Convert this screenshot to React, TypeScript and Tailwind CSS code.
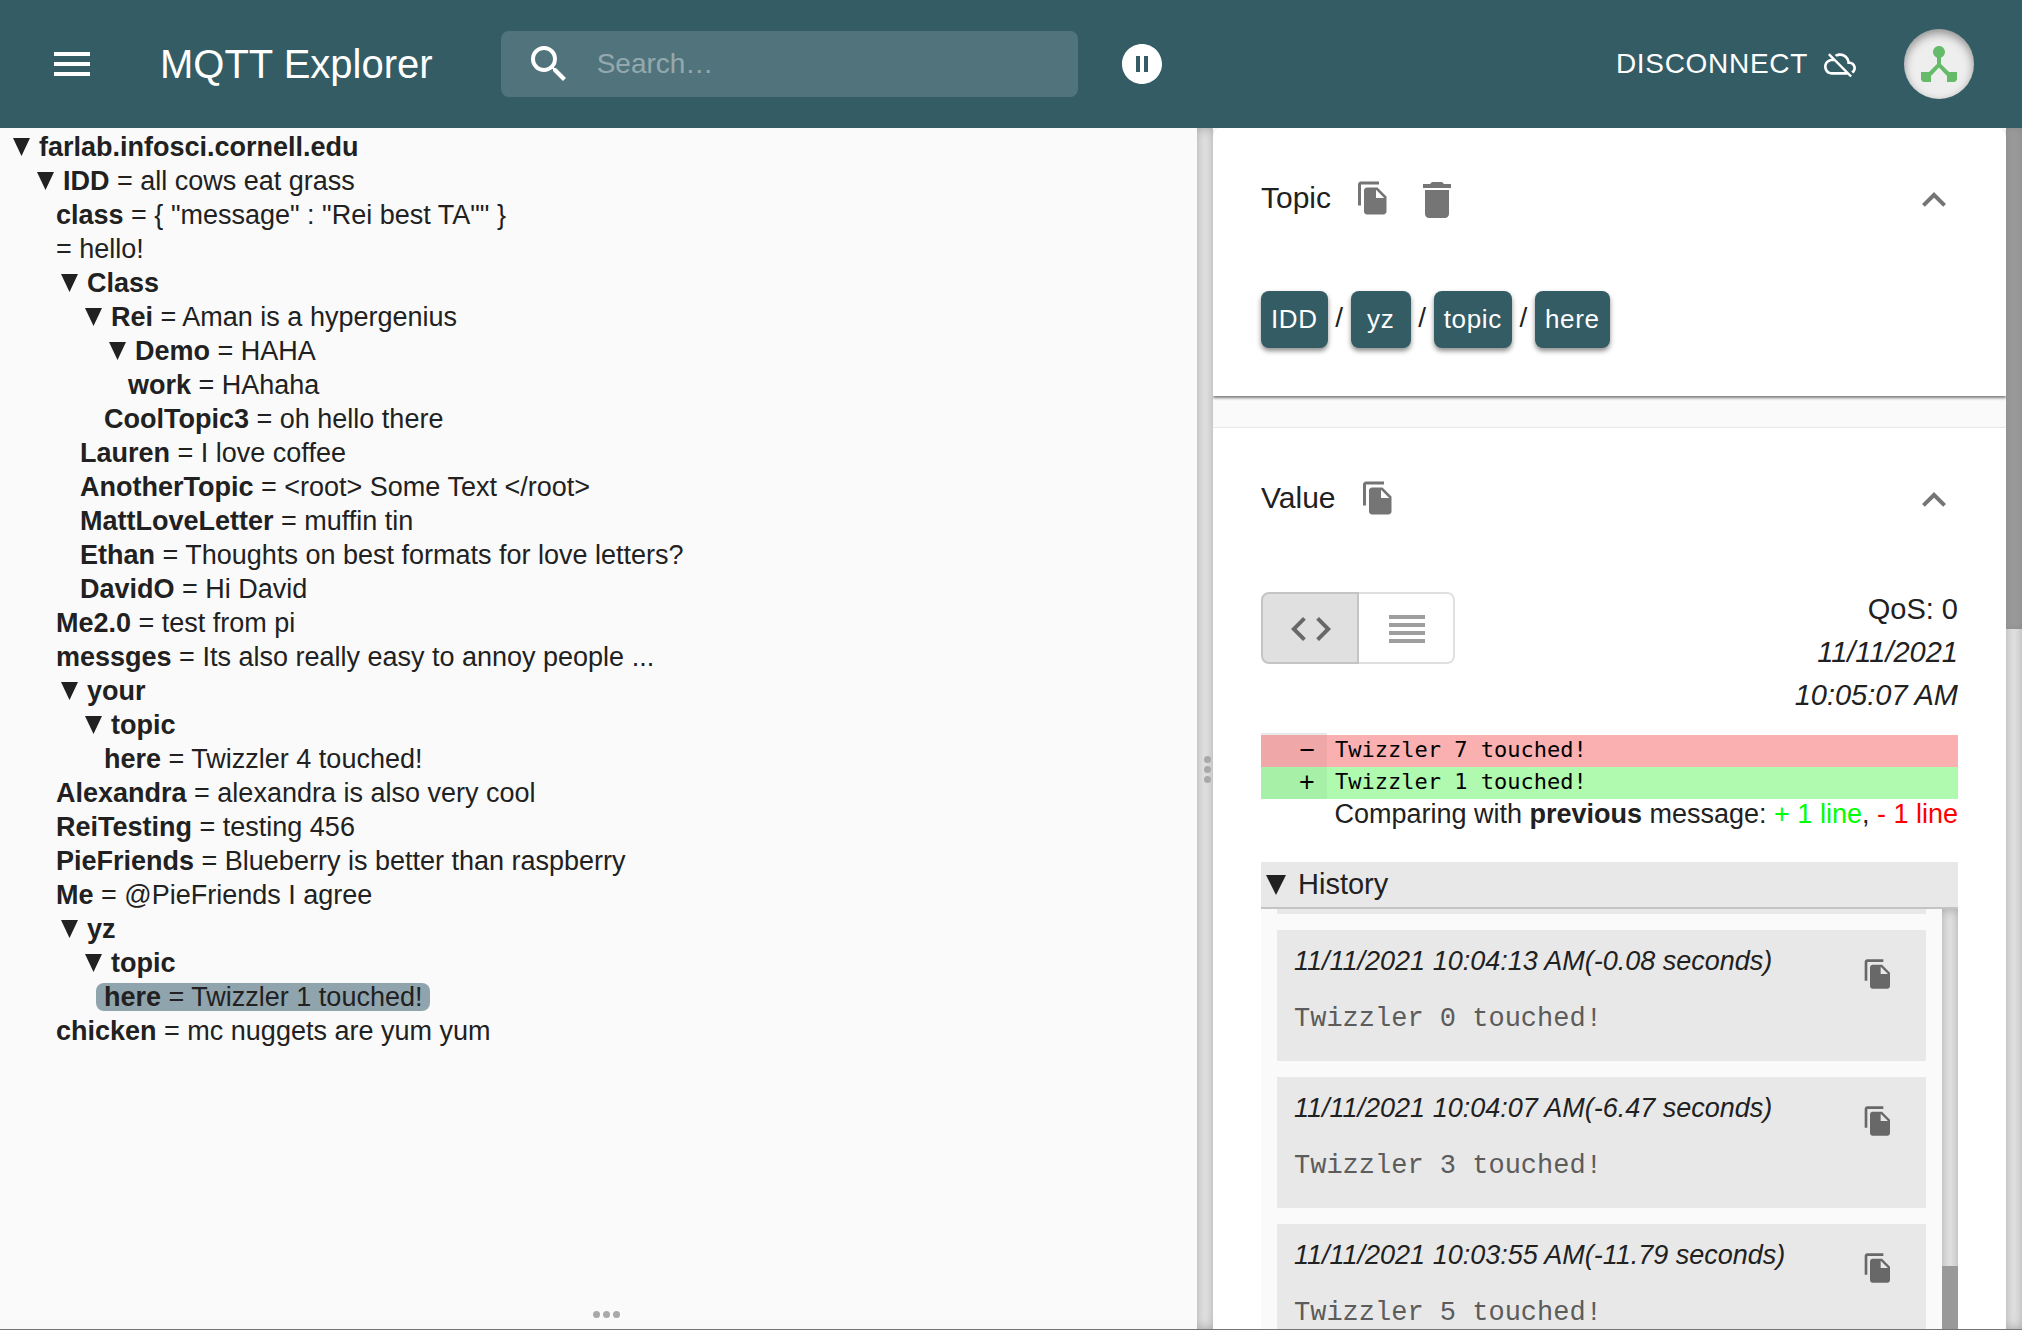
import { useState } from "react";
import type { ReactNode } from "react";
import {
  MdCloudOff,
  MdCode,
  MdDelete,
  MdDeviceHub,
  MdExpandLess,
  MdMenu,
  MdPauseCircleFilled,
  MdReorder,
  MdSearch,
} from "react-icons/md";

type TopicNode = {
  name?: string;
  value?: string;
  selected?: boolean;
  children?: TopicNode[];
};

const tree: TopicNode = {
  name: "farlab.infosci.cornell.edu",
  children: [
    {
      name: "IDD",
      value: "all cows eat grass",
      children: [
        { name: "class", value: '{ "message" : "Rei best TA"" }' },
        { value: "hello!" },
        {
          name: "Class",
          children: [
            {
              name: "Rei",
              value: "Aman is a hypergenius",
              children: [
                { name: "Demo", value: "HAHA", children: [{ name: "work", value: "HAhaha" }] },
                { name: "CoolTopic3", value: "oh hello there" },
              ],
            },
            { name: "Lauren", value: "I love coffee" },
            { name: "AnotherTopic", value: "<root> Some Text </root>" },
            { name: "MattLoveLetter", value: "muffin tin" },
            { name: "Ethan", value: "Thoughts on best formats for love letters?" },
            { name: "DavidO", value: "Hi David" },
          ],
        },
        { name: "Me2.0", value: "test from pi" },
        { name: "messges", value: "Its also really easy to annoy people ..." },
        {
          name: "your",
          children: [{ name: "topic", children: [{ name: "here", value: "Twizzler 4 touched!" }] }],
        },
        { name: "Alexandra", value: "alexandra is also very cool" },
        { name: "ReiTesting", value: "testing 456" },
        { name: "PieFriends", value: "Blueberry is better than raspberry" },
        { name: "Me", value: "@PieFriends I agree" },
        {
          name: "yz",
          children: [
            {
              name: "topic",
              children: [{ name: "here", value: "Twizzler 1 touched!", selected: true }],
            },
          ],
        },
        { name: "chicken", value: "mc nuggets are yum yum" },
      ],
    },
  ],
};

const history = [
  { when: "11/11/2021 10:04:13 AM(-0.08 seconds)", text: "Twizzler 0 touched!" },
  { when: "11/11/2021 10:04:07 AM(-6.47 seconds)", text: "Twizzler 3 touched!" },
  { when: "11/11/2021 10:03:55 AM(-11.79 seconds)", text: "Twizzler 5 touched!" },
];

function CopyIcon({ className }: { className: string }) {
  return (
    <svg viewBox="0 0 24 24" className={className} fill="currentColor" aria-hidden="true">
      <path d="M16 1H4c-1.1 0-2 .9-2 2v14h2V3h12V1zm-1 4l6 6v10c0 1.1-.9 2-2 2H7.99C6.89 23 6 22.1 6 21l.01-14c0-1.1.89-2 1.99-2h7zm-1 7h5.5L14 6.5V12z" />
    </svg>
  );
}

function Triangle() {
  return (
    <svg viewBox="0 0 18 18" className="size-[18px] shrink-0 fill-[#212121]" aria-hidden="true">
      <path d="M0 0h17L8.500 18z" />
    </svg>
  );
}

function TreeItem({ node }: { node: TopicNode }) {
  const [open, setOpen] = useState(true);
  const branch = Boolean(node.children);
  return (
    <li role="treeitem" aria-selected={Boolean(node.selected)}>
      <div className="flex h-[34px] items-center">
        <button
          type="button"
          onClick={() => setOpen(!open)}
          className={
            node.selected
              ? "flex h-7 items-center rounded-lg bg-[#90a4ad] px-2"
              : "flex h-7 items-center rounded-lg px-2"
          }
        >
          {branch && (
            <span className="flex w-[31px] pl-[5px]">
              <Triangle />
            </span>
          )}
          <span className="whitespace-pre">
            {node.name && <b>{node.name}</b>}
            {node.name && node.value ? " " : ""}
            {node.value ? `= ${node.value}` : ""}
          </span>
        </button>
      </div>
      {branch && open && (
        <ul role="group" className="pl-6">
          {node.children!.map((child, i) => (
            <TreeItem key={i} node={child} />
          ))}
        </ul>
      )}
    </li>
  );
}

function ScrollTrack({ children }: { children?: ReactNode }) {
  return (
    <div className="flex w-4 shrink-0 flex-col bg-[#e8e8e8] shadow-[inset_0_0_12px_rgba(0,0,0,0.3)]">
      {children}
    </div>
  );
}

function SectionHeader({ title, actions }: { title: string; actions: ReactNode }) {
  return (
    <div className="flex h-12 items-center justify-between">
      <div className="flex items-center">
        <h2 className="pb-1 text-[30px] leading-10">{title}</h2>
        {actions}
      </div>
      <button type="button" aria-label={`Collapse ${title}`}>
        <MdExpandLess className="size-12 text-[#757575]" />
      </button>
    </div>
  );
}

function Dot() {
  return <span className="size-[7px] rounded-full bg-[#a9a9a9]" />;
}

export default function App() {
  return (
    <div className="flex h-screen w-full flex-col overflow-hidden border-b border-[#757575] bg-[#fafafa] font-['Liberation_Sans',Arial,sans-serif] text-[28px] text-[#212121]">
      <header className="flex h-32 shrink-0 items-center bg-[#335c65] px-12 text-white">
        <button type="button" aria-label="Menu">
          <MdMenu className="size-12" />
        </button>
        <h1 className="ml-16 text-[40px] leading-[64px] whitespace-nowrap">MQTT Explorer</h1>
        <label className="ml-[68px] flex h-[66px] w-[577px] items-center rounded-lg bg-white/15 pl-6">
          <MdSearch className="size-12 shrink-0" />
          <input
            type="text"
            aria-label="Search"
            placeholder="Search…"
            className="ml-6 w-full bg-transparent outline-none placeholder:text-white/40"
          />
        </label>
        <button type="button" aria-label="Pause updates" className="ml-10">
          <MdPauseCircleFilled className="size-12" />
        </button>
        <button type="button" className="ml-auto flex items-center gap-4 tracking-wide">
          DISCONNECT
          <MdCloudOff className="size-8" />
        </button>
        <div className="ml-12 flex size-[70px] items-center justify-center rounded-full bg-[#eeeeee] shadow-[inset_0_4px_10px_rgba(0,0,0,0.4)]">
          <MdDeviceHub className="size-12 overflow-hidden rounded-full text-[#66bb6a]" />
        </div>
      </header>

      <main className="flex min-h-0 flex-1">
        <div className="flex min-w-0 flex-1 flex-col justify-between">
          <ul role="tree" className="pt-0.5 text-[27px] leading-7">
            <TreeItem node={tree} />
          </ul>
          <div className="flex justify-center gap-[3px] pb-[11px] pl-4">
            <Dot />
            <Dot />
            <Dot />
          </div>
        </div>

        <ScrollTrack>
          <div className="my-auto flex flex-col items-center gap-[3px] pt-[82px] pl-1">
            <Dot />
            <Dot />
            <Dot />
          </div>
        </ScrollTrack>

        <aside className="flex w-[793px] shrink-0 flex-col gap-8 overflow-hidden">
          <section className="rounded-t-lg bg-white px-12 pt-12 pb-12 shadow-[0_2px_3px_rgba(0,0,0,0.5)]">
            <SectionHeader
              title="Topic"
              actions={
                <>
                  <button type="button" aria-label="Copy topic" className="ml-6 pb-1">
                    <CopyIcon className="size-9 text-[#757575]" />
                  </button>
                  <button type="button" aria-label="Delete topic" className="ml-[22px]">
                    <MdDelete className="size-12 text-[#757575]" />
                  </button>
                </>
              }
            />
            <nav aria-label="Topic path" className="mt-[67px] flex items-center">
              {["IDD", "yz", "topic", "here"].map((part, i) => (
                <div key={part} className="flex items-center">
                  {i > 0 && <span className="w-[23px] pb-1 text-center">/</span>}
                  <button
                    type="button"
                    className="h-[57px] min-w-[60px] rounded-lg bg-[#335c65] px-2.5 text-[26px] tracking-wide text-white shadow-[0_3px_5px_rgba(0,0,0,0.45)]"
                  >
                    {part}
                  </button>
                </div>
              ))}
            </nav>
          </section>

          <section className="flex min-h-0 flex-1 flex-col bg-white px-12 pt-12 shadow-[0_0_2px_rgba(0,0,0,0.2)]">
            <SectionHeader
              title="Value"
              actions={
                <button type="button" aria-label="Copy value" className="ml-6 pb-1">
                  <CopyIcon className="size-9 text-[#757575]" />
                </button>
              }
            />
            <div className="mt-16 flex items-start justify-between">
              <div className="mt-1 flex" role="group" aria-label="Display mode">
                <button
                  type="button"
                  aria-label="Diff"
                  aria-pressed="true"
                  className="flex h-[72px] w-[98px] items-center justify-center rounded-l-lg border-2 border-[#c4c4c4] bg-[#e0e0e0] pt-0.5 pl-0.5 text-[#686868]"
                >
                  <MdCode className="size-12" />
                </button>
                <button
                  type="button"
                  aria-label="Raw"
                  aria-pressed="false"
                  className="flex h-[72px] w-24 items-center justify-center rounded-r-lg border-2 border-l-0 border-[#e0e0e0] pt-0.5 pl-0.5 text-[#9e9e9e]"
                >
                  <MdReorder className="size-12" />
                </button>
              </div>
              <div className="text-right text-[29px] leading-[43px]">
                <p>QoS: 0</p>
                <p className="italic">11/11/2021</p>
                <p className="italic">10:05:07 AM</p>
              </div>
            </div>

            <div className="mt-4 font-['DejaVu_Sans_Mono',monospace] text-[22px] leading-[30px] text-black">
              <div className="h-0.5 w-[66px] bg-[#e8e8e8]" />
              <div className="flex h-8 bg-[#fab0b1]">
                <span className="w-[66px] bg-[#f0a7a8] pr-3 text-right font-['Liberation_Mono',monospace] text-[27px] leading-[34px]">
                  −
                </span>
                <span className="pl-2">Twizzler 7 touched!</span>
              </div>
              <div className="flex h-8 bg-[#b0fab0]">
                <span className="w-[66px] bg-[#a7f0a7] pr-3 text-right font-['Liberation_Mono',monospace] text-[27px] leading-[34px]">
                  +
                </span>
                <span className="pl-2">Twizzler 1 touched!</span>
              </div>
            </div>
            <p className="text-right text-[27px] leading-[30px]">
              Comparing with <b>previous</b> message: <span className="text-[#00ff00]">+ 1 line</span>,{" "}
              <span className="text-[#ff0000]">- 1 line</span>
            </p>

            <button
              type="button"
              className="mt-[33px] flex h-[47px] shrink-0 items-center gap-3 border-b-2 border-[#c4c4c4] bg-[#e8e8e8] pl-[5px] text-[29px]"
            >
              <svg viewBox="0 0 20 20" className="size-5 fill-[#212121]" aria-hidden="true">
                <path d="M0 0h20L10 20z" />
              </svg>
              History
            </button>
            <div className="flex min-h-0 flex-1 bg-[#fafafa]">
              <ul className="flex flex-1 flex-col gap-4 overflow-hidden px-4">
                <li className="h-[5px] shrink-0 bg-[#e8e8e8]" />
                {history.map((entry) => (
                  <li key={entry.when} className="flex h-[131px] shrink-0 justify-between bg-[#e8e8e8] px-[17px] pt-4">
                    <div>
                      <p className="text-[27px] leading-[30px] italic">{entry.when}</p>
                      <p className="mt-[27px] font-['Liberation_Mono',monospace] text-[27px] leading-8 text-[#5c5c5c]">
                        {entry.text}
                      </p>
                    </div>
                    <button type="button" aria-label="Copy message" className="mt-3 mr-[15px] self-start">
                      <CopyIcon className="size-8 text-[#686868]" />
                    </button>
                  </li>
                ))}
              </ul>
              <ScrollTrack>
                <div className="mt-auto h-[63px] bg-[#999999]" />
              </ScrollTrack>
            </div>
          </section>
        </aside>

        <ScrollTrack>
          <div className="h-[501px] bg-[#999999] shadow-[inset_0_0_6px_rgba(0,0,0,0.1)]" />
        </ScrollTrack>
      </main>
    </div>
  );
}
